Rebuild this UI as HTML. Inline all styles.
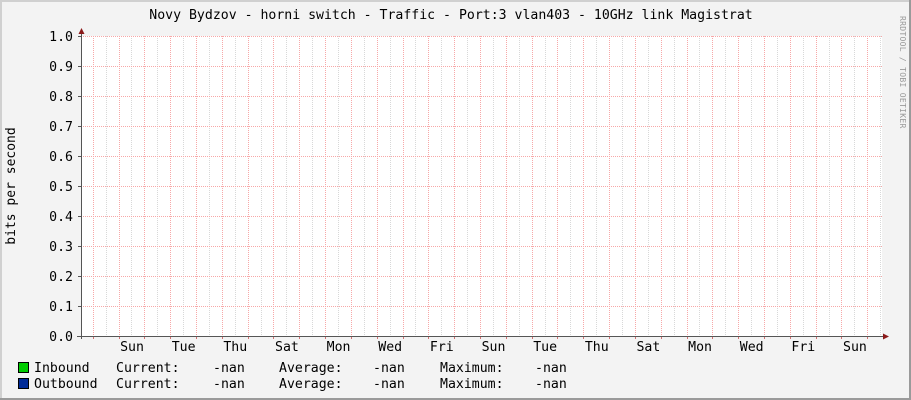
<!DOCTYPE html>
<html><head><meta charset="utf-8"><style>
html,body{margin:0;padding:0;background:#f3f3f3}
svg{display:block}
text{font-family:"DejaVu Sans Mono","Liberation Mono",monospace;fill:#000}
#grid line{shape-rendering:crispEdges}
</style></head><body>
<svg id="g" width="911" height="400" xmlns="http://www.w3.org/2000/svg">
<rect x="0" y="0" width="911" height="400" fill="#f3f3f3"/>
<rect x="0" y="0" width="911" height="2" fill="#d0d0d0"/>
<rect x="0" y="0" width="2" height="400" fill="#d0d0d0"/>
<rect x="909" y="0" width="2" height="400" fill="#9a9a9a"/>
<rect x="0" y="398" width="911" height="2" fill="#9a9a9a"/>
<rect x="81" y="36" width="801" height="300" fill="#ffffff"/>
<g id="grid"></g>
<text x="451" y="19" font-size="13.2" text-anchor="middle">Novy Bydzov - horni switch - Traffic - Port:3 vlan403 - 10GHz link Magistrat</text>
<text transform="translate(900,16) rotate(90)" font-size="8" style="fill:#999" letter-spacing="0.3">RRDTOOL / TOBI OETIKER</text>
<text transform="translate(15,186) rotate(-90)" font-size="13" text-anchor="middle">bits per second</text>
<g id="yl" font-size="13.2" text-anchor="end"></g>
<g id="xl" font-size="13.2" text-anchor="middle"></g>
<line x1="81.5" y1="339" x2="81.5" y2="33" stroke="#555" stroke-width="1"/>
<polygon points="78.5,34 84.5,34 81.5,28" fill="#8b1a1a"/>
<line x1="77" y1="336.5" x2="884" y2="336.5" stroke="#555" stroke-width="1"/>
<polygon points="883,333.5 883,339.5 889,336.5" fill="#8b1a1a"/>
<rect x="18.5" y="362.5" width="10" height="10" fill="#00cc00" stroke="#000"/>
<rect x="18.5" y="378.5" width="10" height="10" fill="#002a97" stroke="#000"/>
<g font-size="13.2">
<text x="34" y="372">Inbound</text><text x="116" y="372">Current:</text><text x="213" y="372">-nan</text><text x="279" y="372">Average:</text><text x="373" y="372">-nan</text><text x="440" y="372">Maximum:</text><text x="535" y="372">-nan</text>
<text x="34" y="388">Outbound</text><text x="116" y="388">Current:</text><text x="213" y="388">-nan</text><text x="279" y="388">Average:</text><text x="373" y="388">-nan</text><text x="440" y="388">Maximum:</text><text x="535" y="388">-nan</text>
</g>
</svg>
<script>
var NS="http://www.w3.org/2000/svg",g=document.getElementById('grid');
function ln(x1,y1,x2,y2,c,d){var l=document.createElementNS(NS,'line');l.setAttribute('x1',x1);l.setAttribute('y1',y1);l.setAttribute('x2',x2);l.setAttribute('y2',y2);l.setAttribute('stroke',c);l.setAttribute('stroke-width',1);if(d)l.setAttribute('stroke-dasharray',d);g.appendChild(l);}
var d=25.82;
for(var i=0;i<32;i++){var xg=Math.round(92.7+d*i-d/2)+0.5;if(xg>82&&xg<882)ln(xg,36,xg,336,'#d8d8d8','1,1');}
for(var k=1;k<=10;k++){var y=336-30*k+0.5;ln(81,y,882,y,'#f7a8a8','1,1');}
for(var i=0;i<32;i++){var x=Math.round(92.7+d*i)+0.5;if(x<882){ln(x,36,x,336,'#f7a8a8','1,1');ln(x,336,x,339,'#d07070');}}
var yl=document.getElementById('yl');
for(var k=0;k<=10;k++){var y=336-30*k+0.5;ln(78,y,81,y,'#555');
var t=document.createElementNS(NS,'text');t.setAttribute('x',73);t.setAttribute('y',336-30*k+5);t.textContent=(k/10).toFixed(1);yl.appendChild(t);}
var days=['Sun','Tue','Thu','Sat','Mon','Wed','Fri','Sun','Tue','Thu','Sat','Mon','Wed','Fri','Sun'],xl=document.getElementById('xl');
for(var j=0;j<15;j++){var t=document.createElementNS(NS,'text');t.setAttribute('x',132+51.64*j);t.setAttribute('y',351);t.textContent=days[j];xl.appendChild(t);}
</script>
</body></html>
